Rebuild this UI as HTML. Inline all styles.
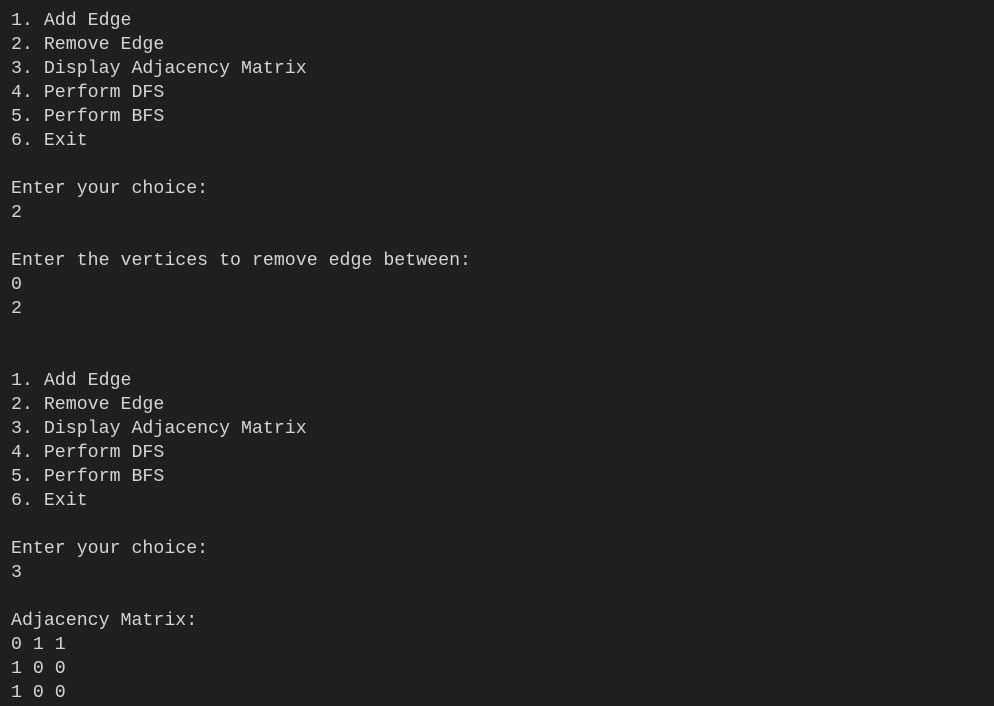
<!DOCTYPE html>
<html><head><meta charset="utf-8"><style>
html,body{margin:0;padding:0;background:#1f1f1f;width:994px;height:706px;overflow:hidden}
pre{margin:0;padding:9px 0 0 11px;font-family:"Liberation Mono",monospace;font-size:18.25px;line-height:24px;color:#d4d4d4;}
</style></head><body><pre>1. Add Edge
2. Remove Edge
3. Display Adjacency Matrix
4. Perform DFS
5. Perform BFS
6. Exit

Enter your choice:
2

Enter the vertices to remove edge between:
0
2


1. Add Edge
2. Remove Edge
3. Display Adjacency Matrix
4. Perform DFS
5. Perform BFS
6. Exit

Enter your choice:
3

Adjacency Matrix:
0 1 1
1 0 0
1 0 0
</pre></body></html>
